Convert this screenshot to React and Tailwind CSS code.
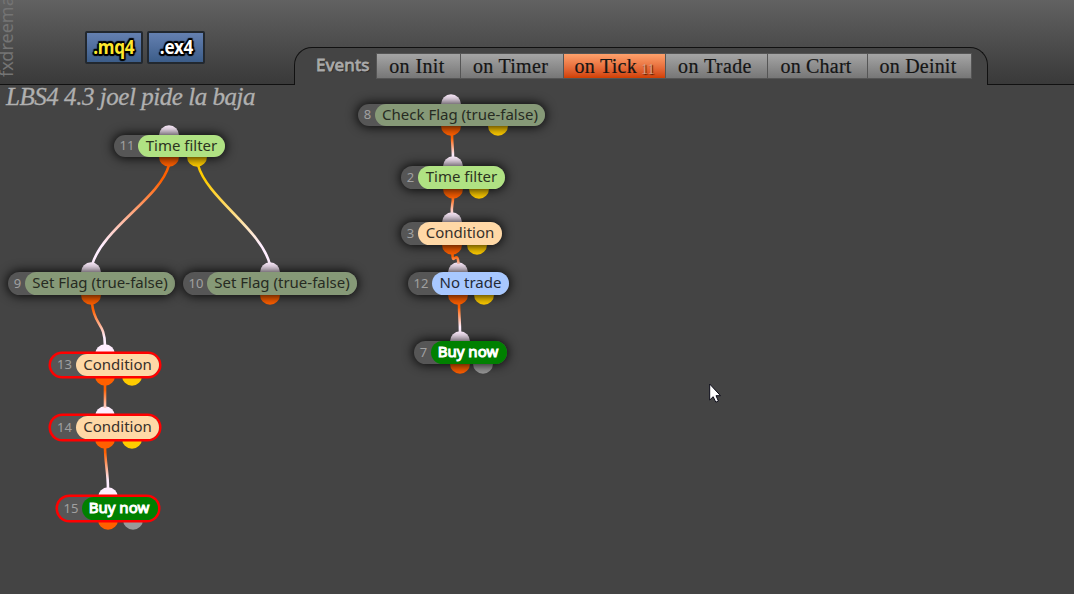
import React from 'react';

const TABS = [
    { name: 'on Init', width: 'w-[84px]', fit: 'tracking-[0.4px] pr-[3px]' },
    { name: 'on Timer', width: 'w-[103px]', fit: 'tracking-[0.3px] pr-[3px]' },
    { name: 'on Tick', width: 'w-[102px]', fit: 'tracking-[0.3px]', count: 11, active: true },
    { name: 'on Trade', width: 'w-[102px]', fit: 'tracking-[0.4px] pr-[3px]' },
    { name: 'on Chart', width: 'w-[100px]', fit: 'tracking-[0.2px] pr-[3px]' },
    { name: 'on Deinit', width: 'w-[104px]', fit: 'tracking-[0.2px] pr-[3px]' },
];

const GREEN = 'bg-[#b0e283] text-[#2b331f]';
const FLAG = 'bg-[#869977] text-[#262b22]';
const PEACH = 'bg-[#ffd8a6] text-[#37302a]';
const BLUE = 'bg-[#a8c8ff] text-[#232a37]';
const BUY = 'bg-[#008000] text-white pr-[2px] [-webkit-text-stroke:1px_#fff]';

// x/y is the top left corner of the pill, numW the part that shows the id
const BLOCKS = [
    { id: 11, label: 'Time filter', x: 114, y: 135, w: 111, h: 22, numW: 24, color: GREEN, port: 169, out: [[169, '#ff6000'], [197, '#ffcc00']] },
    { id: 9, label: 'Set Flag (true-false)', x: 8, y: 272, w: 167, h: 23, numW: 17, color: FLAG, port: 91, out: [[91, '#ff6000']] },
    { id: 10, label: 'Set Flag (true-false)', x: 183, y: 272, w: 174, h: 23, numW: 24, color: FLAG, port: 270, out: [[270, '#ff6000']] },
    { id: 13, label: 'Condition', x: 51, y: 354, w: 108, h: 22, numW: 25, color: PEACH, port: 105, out: [[105, '#ff6000'], [132, '#ffcc00']], selected: true },
    { id: 14, label: 'Condition', x: 51, y: 416, w: 108, h: 23, numW: 25, color: PEACH, port: 105, out: [[105, '#ff6000'], [132, '#ffcc00']], selected: true },
    { id: 15, label: 'Buy now', x: 58, y: 497, w: 100, h: 23, numW: 24, color: BUY, port: 108, out: [[108, '#ff6000'], [133, '#999999']], selected: true },
    { id: 8, label: 'Check Flag (true-false)', x: 358, y: 104, w: 187, h: 22, numW: 17, color: FLAG, port: 451, out: [[451, '#ff6000'], [498, '#ffcc00']] },
    { id: 2, label: 'Time filter', x: 401, y: 166, w: 104, h: 23, numW: 17, color: GREEN, port: 453, out: [[453, '#ff6000'], [479, '#ffcc00']] },
    { id: 3, label: 'Condition', x: 401, y: 222, w: 101, h: 23, numW: 17, color: PEACH, port: 452, out: [[452, '#ff6000'], [477, '#ffcc00']] },
    { id: 12, label: 'No trade', x: 408, y: 272, w: 101, h: 23, numW: 24, color: BLUE, port: 458, out: [[458, '#ff6000'], [484, '#ffcc00']] },
    { id: 7, label: 'Buy now', x: 414, y: 341, w: 93, h: 23, numW: 17, color: BUY, port: 460, out: [[460, '#ff6000'], [483, '#999999']] },
];

const WIRES = [
    { d: 'M169 165 C160 198 103 228 92 265', from: '#ff6000', y1: 165, y2: 265 },
    { d: 'M198 165 C207 198 262 230 270 265', from: '#ffcc00', y1: 165, y2: 265 },
    { d: 'M92 303 C94 326 105 322 105 346', from: '#ff6000', y1: 303, y2: 346 },
    { d: 'M105 384 L105 408', from: '#ff6000', y1: 384, y2: 420 },
    { d: 'M105 446 C105 462 108 472 108 489', from: '#ff6000', y1: 446, y2: 489 },
    { d: 'M452 134 C452 144 453 148 453 158', from: '#ff6000', y1: 134, y2: 160 },
    { d: 'M453 197 C453 205 451 206 452 214', from: '#ff6000', y1: 193, y2: 220 },
    { d: 'M452.5 254 C452.5 267 457.5 248 458.5 264', from: '#ff6000', y1: 254, y2: 270 },
    { d: 'M459 303 C459 316 460 320 460 333', from: '#ff6000', y1: 303, y2: 333 },
];

function Tab({ tab }) {
    return (
        <button
            className={`h-[26px] shrink-0 border border-l-0 border-[#555] flex items-center justify-center font-['Liberation_Serif',serif] text-[20px] leading-none whitespace-nowrap text-[#151515] [-webkit-text-stroke:0.2px_#151515] ${tab.width} ${tab.fit} ${tab.active ? 'bg-linear-to-b from-[#ffa16b] to-[#d13f00]' : 'bg-linear-to-b from-[#a5a5a5] to-[#777]'}`}
        >
            {tab.name}
            {tab.count && (
                <span className="ml-[4px] mt-2 text-[14px] tracking-normal text-[#d5a084] [-webkit-text-stroke:0] [text-shadow:1px_1px_1px_#4b1700]">{tab.count}</span>
            )}
        </button>
    );
}

function FileButton({ label, color }) {
    return (
        <button className="h-[33px] w-[58px] rounded-[2px] border-2 border-[#22282f] bg-linear-to-b from-[#6480b1] to-[#3c5d89] flex items-center justify-center">
            <span
                className={`-mt-[2px] font-['Noto_Sans',sans-serif] text-[19px] leading-6 font-bold tracking-[-0.3px] scale-x-[.9] [text-shadow:1px_0_1px_#000,-1px_0_1px_#000,0_1px_1px_#000,0_-1px_1px_#000,2px_1px_1px_#000,-2px_1px_1px_#000,1px_2px_1px_#000,-1px_2px_1px_#000,1px_-2px_1px_#000,-1px_-2px_1px_#000] ${color}`}
            >
                {label}
            </span>
        </button>
    );
}

function Block({ block }) {
    return (
        <div
            className={`absolute flex rounded-full bg-[#565656] ${block.selected ? 'shadow-[0_0_0_2.5px_#ff0000]' : 'shadow-[0_0_11px_1px_rgba(0,0,0,0.9)]'}`}
            style={{ left: block.x, top: block.y, width: block.w, height: block.h }}
        >
            <div
                className="shrink-0 flex items-center justify-center pl-[2px] pb-px text-[13px] leading-none text-[#a0a0a0]"
                style={{ width: block.numW }}
            >
                {block.id}
            </div>
            <div className={`flex-1 flex items-center justify-center rounded-full text-[15px] leading-none pb-[2px] whitespace-nowrap ${block.color}`}>
                {block.label}
            </div>
        </div>
    );
}

export default function App() {
    return (
        <div className="relative w-[1074px] h-[594px] overflow-hidden bg-[#444] font-['Noto_Sans',sans-serif]">
            {/* Toolbar */}
            <header className="relative z-10 flex h-[85px] bg-linear-to-b from-[#626262] to-[#393939]">
                <div className="w-[294px] shrink-0 border-b border-[#111] flex overflow-hidden">
                    <div className="w-5 -ml-1 h-[77px] shrink-0 flex items-start [writing-mode:vertical-rl] rotate-180 text-[18px] leading-5 whitespace-nowrap text-[#747474]">
                        fxdreema
                    </div>
                    <div className="flex gap-1 ml-[69px] mt-[31px]">
                        <FileButton label=".mq4" color="text-[#ffe92e]" />
                        <FileButton label=".ex4" color="text-white" />
                    </div>
                </div>
                <div className="mt-[47px] w-[694px] shrink-0 flex rounded-t-[18px] border border-b-0 border-[#111] bg-[#444]">
                    <span className="w-[81px] shrink-0 pl-[21px] pt-[5px] text-[17px] leading-6 tracking-[0.2px] text-[#aaa] [-webkit-text-stroke:0.8px_#aaa] [text-shadow:1px_1px_1px_#222]">
                        Events
                    </span>
                    <nav className="mt-[5px] flex h-[26px] border-l border-[#555]">
                        {TABS.map((tab) => (
                            <Tab key={tab.name} tab={tab} />
                        ))}
                    </nav>
                </div>
                <div className="flex-1 border-b border-[#111]" />
            </header>

            <h1 className="-mt-px pl-[6px] font-['Z003','Liberation_Serif',serif] text-[25px] leading-[26px] italic tracking-[-0.46px] text-[#b0b0b0] [-webkit-text-stroke:0.3px_#b0b0b0]">
                LBS4 4.3 joel pide la baja
            </h1>

            {/* Wires and ports, under the blocks */}
            <svg className="absolute left-0 top-0" width="1074" height="594" fill="none">
                <defs>
                    {WIRES.map((wire, i) => (
                        <linearGradient key={i} id={`wire${i}`} gradientUnits="userSpaceOnUse" x1="0" x2="0" y1={wire.y1} y2={wire.y2}>
                            <stop offset="0.15" stopColor={wire.from} />
                            <stop offset="0.8" stopColor="#ffeeff" />
                        </linearGradient>
                    ))}
                </defs>
                {BLOCKS.map((b) => (
                    <g key={b.id}>
                        <circle cx={b.port} cy={b.y + 0.2} r="10" fill="#ffeeff" />
                        {b.out.map(([x, color]) => (
                            <circle key={x} cx={x} cy={b.y + b.h - 0.2} r="10" fill={color} />
                        ))}
                    </g>
                ))}
                {WIRES.map((wire, i) => (
                    <path key={i} d={wire.d} stroke={`url(#wire${i})`} strokeWidth="2.6" />
                ))}
            </svg>

            {BLOCKS.map((b) => (
                <Block key={b.id} block={b} />
            ))}

            {/* Mouse pointer */}
            <svg className="absolute left-[709px] top-[383px]" width="14" height="21" viewBox="0 0 14 21">
                <path d="M0.7 1 V17 L4.2 13.7 L6.8 19.2 L9.4 18 L7 12.7 H11.5 Z" fill="#fff" stroke="#0b0b18" strokeWidth="1" />
            </svg>
        </div>
    );
}
